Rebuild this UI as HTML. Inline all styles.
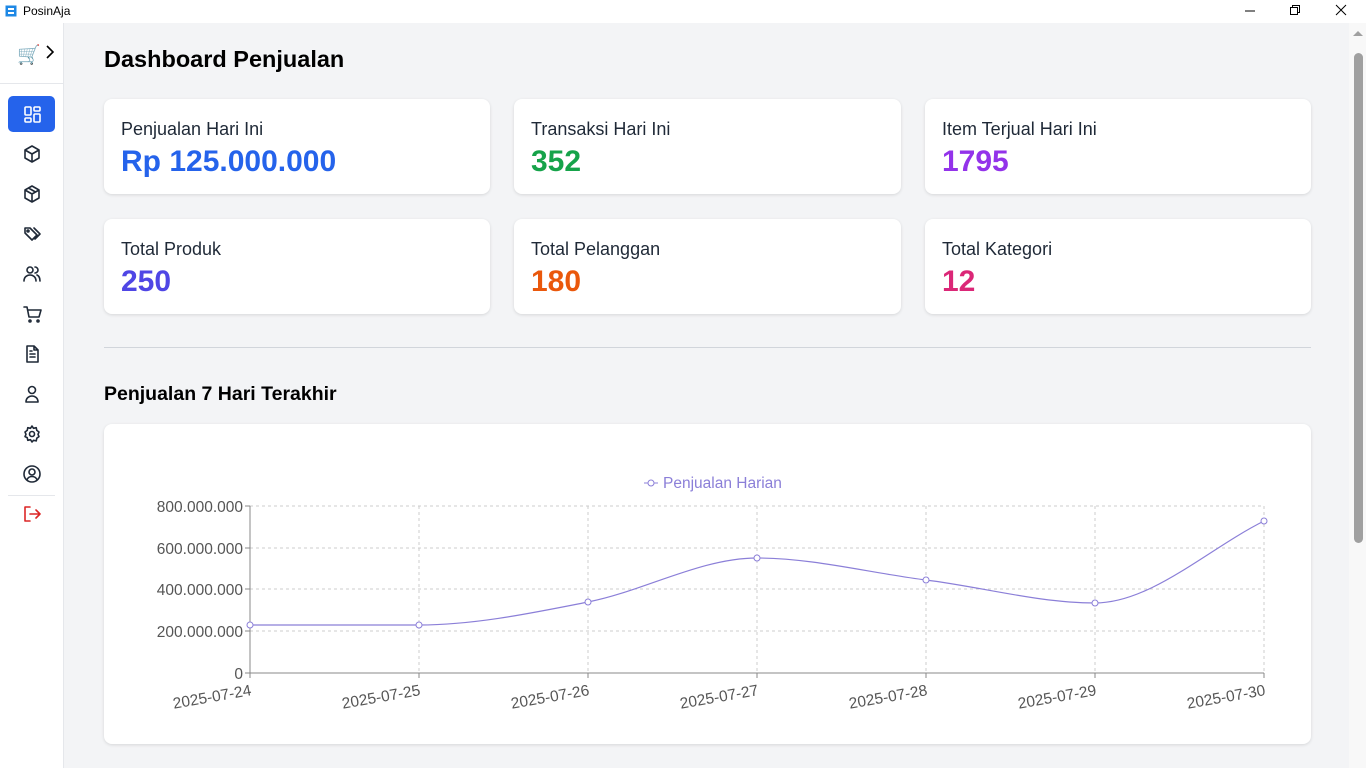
<!DOCTYPE html>
<html><head><meta charset="utf-8"><style>
*{box-sizing:border-box;margin:0;padding:0}
body{width:1366px;height:768px;overflow:hidden;font-family:"Liberation Sans",sans-serif;background:#f3f4f6;position:relative}
.tb{position:absolute;left:0;top:0;width:1366px;height:23px;background:#fff;font-size:12px}
.side{position:absolute;left:0;top:23px;width:64px;height:745px;background:#fff;border-right:1px solid #e5e7eb}
.ic{position:absolute;left:8px;width:47px;height:36px;display:flex;align-items:center;justify-content:center}
.ic svg{width:20px;height:20px;fill:none;stroke:#1f2937;stroke-width:1.6;stroke-linecap:round;stroke-linejoin:round}
.card{position:absolute;background:#fff;border-radius:8px;box-shadow:0 1px 3px rgba(0,0,0,.12)}
.lbl{position:absolute;left:17px;top:20px;font-size:18px;color:#1f2937}
.val{position:absolute;left:17px;top:46px;font-size:30px;font-weight:bold}
h1{position:absolute;left:104px;top:46px;font-size:23.5px;font-weight:bold;color:#000}
h2{position:absolute;left:104px;top:383px;font-size:19.5px;font-weight:bold;color:#000}
</style></head><body>
<div class="tb">
<svg style="position:absolute;left:5px;top:5px" width="12" height="12"><rect x="0.5" y="0.5" width="11" height="11" fill="#1e88e5"/><rect x="3" y="3" width="6" height="2" fill="#fff"/><rect x="3" y="7" width="6" height="2" fill="#fff"/></svg>
<span style="position:absolute;left:23px;top:4px;color:#000">PosinAja</span>
<svg style="position:absolute;left:1244px;top:5px" width="12" height="12"><line x1="1" y1="6" x2="11" y2="6" stroke="#000"/></svg>
<svg style="position:absolute;left:1289px;top:4px" width="12" height="12"><rect x="1.5" y="3.5" width="7" height="7" fill="none" stroke="#000"/><path d="M3.5 3.5V1.5h7v7h-2" fill="none" stroke="#000"/></svg>
<svg style="position:absolute;left:1335px;top:4px" width="12" height="12"><path d="M1 1L11 11M11 1L1 11" stroke="#000"/></svg>
</div>
<div class="side">
<div style="position:absolute;left:17px;top:20px;font-size:19px">🛒</div>
<svg style="position:absolute;left:46px;top:22px" width="8" height="14"><path d="M1 1l6 6-6 6" fill="none" stroke="#000" stroke-width="1.6"/></svg>
<div style="position:absolute;left:0;top:60px;width:63px;border-top:1px solid #e5e7eb"></div>
<div class="ic" style="top:73px;background:#2563eb;border-radius:5px"><svg style="stroke:#fff"><rect x="3" y="3" width="6" height="8" rx="1"/><rect x="12" y="3" width="6" height="4" rx="1"/><rect x="3" y="14" width="6" height="4" rx="1"/><rect x="12" y="10" width="6" height="8" rx="1"/></svg></div>
<div class="ic" style="top:113px"><svg><path d="M10 2l7 4v8l-7 4-7-4V6z M3 6l7 4 7-4 M10 10v8"/></svg></div>
<div class="ic" style="top:153px"><svg><path d="M10 2l7 4v8l-7 4-7-4V6z M3 6l7 4 7-4 M10 10v8 M6.5 4l7 4"/></svg></div>
<div class="ic" style="top:193px"><svg><path d="M3 4v5l7 7 5-5-7-7z M12 4l6 6-5 5"/><circle cx="6" cy="7" r="1"/></svg></div>
<div class="ic" style="top:233px"><svg><circle cx="8" cy="6" r="3"/><path d="M2 17c0-4 3-6 6-6s6 2 6 6 M13 3a3 3 0 010 6 M15 11c2 1 3 3 3 6"/></svg></div>
<div class="ic" style="top:273px"><svg><path d="M2 3h3l2 10h10l2-7H6"/><circle cx="8" cy="17" r="1"/><circle cx="16" cy="17" r="1"/></svg></div>
<div class="ic" style="top:313px"><svg><path d="M5 2h7l4 4v12H5z M12 2v4h4 M8 10h5 M8 13h5 M8 7h2"/></svg></div>
<div class="ic" style="top:353px"><svg><circle cx="10" cy="6" r="3.5"/><path d="M4 18c0-4 3-6 6-6s6 2 6 6z"/></svg></div>
<div class="ic" style="top:393px"><svg><circle cx="10" cy="10" r="2.5"/><path d="M10 2l1.5 2.3 2.7-.6.6 2.7L17 8l-1 2.3 1 2.3-2.2 1.6-.6 2.7-2.7-.6L10 18l-1.5-2.3-2.7.6-.6-2.7L3 12.6 4 10.3 3 8l2.2-1.6.6-2.7 2.7.6z"/></svg></div>
<div class="ic" style="top:433px"><svg><circle cx="10" cy="10" r="8"/><circle cx="10" cy="8" r="3"/><path d="M5 15.5c1-2 3-3 5-3s4 1 5 3"/></svg></div>
<div style="position:absolute;left:8px;top:472px;width:47px;border-top:1px solid #e5e7eb"></div>
<div class="ic" style="top:473px"><svg style="stroke:#dc2626"><path d="M8 3H3v14h5 M8 10h10 M14 6l4 4-4 4"/></svg></div>
</div>
<h1>Dashboard Penjualan</h1>
<div class="card" style="left:104px;top:99px;width:386px;height:95px"><div class="lbl">Penjualan Hari Ini</div><div class="val" style="color:#2563eb">Rp 125.000.000</div></div>
<div class="card" style="left:514px;top:99px;width:387px;height:95px"><div class="lbl">Transaksi Hari Ini</div><div class="val" style="color:#16a34a">352</div></div>
<div class="card" style="left:925px;top:99px;width:386px;height:95px"><div class="lbl">Item Terjual Hari Ini</div><div class="val" style="color:#9333ea">1795</div></div>
<div class="card" style="left:104px;top:219px;width:386px;height:95px"><div class="lbl">Total Produk</div><div class="val" style="color:#4f46e5">250</div></div>
<div class="card" style="left:514px;top:219px;width:387px;height:95px"><div class="lbl">Total Pelanggan</div><div class="val" style="color:#ea580c">180</div></div>
<div class="card" style="left:925px;top:219px;width:386px;height:95px"><div class="lbl">Total Kategori</div><div class="val" style="color:#db2777">12</div></div>
<div style="position:absolute;left:104px;top:347px;width:1207px;border-top:1px solid #d1d5db"></div>
<h2>Penjualan 7 Hari Terakhir</h2>
<div class="card" style="left:104px;top:424px;width:1207px;height:320px"></div>
<svg style="position:absolute;left:0;top:0" width="1366" height="768" font-family="Liberation Sans, sans-serif">
<g stroke="#ccc" stroke-dasharray="3,3">
<line x1="250" y1="506" x2="1264" y2="506"/><line x1="250" y1="548" x2="1264" y2="548"/><line x1="250" y1="589" x2="1264" y2="589"/><line x1="250" y1="631" x2="1264" y2="631"/>
<line x1="419" y1="506" x2="419" y2="673"/><line x1="588" y1="506" x2="588" y2="673"/><line x1="757" y1="506" x2="757" y2="673"/><line x1="926" y1="506" x2="926" y2="673"/><line x1="1095" y1="506" x2="1095" y2="673"/><line x1="1264" y1="506" x2="1264" y2="673"/>
</g>
<g stroke="#888"><line x1="250" y1="506" x2="250" y2="673"/><line x1="250" y1="673" x2="1264" y2="673"/>
<line x1="245" y1="506" x2="250" y2="506"/><line x1="245" y1="548" x2="250" y2="548"/><line x1="245" y1="589" x2="250" y2="589"/><line x1="245" y1="631" x2="250" y2="631"/><line x1="245" y1="673" x2="250" y2="673"/>
<line x1="250" y1="673" x2="250" y2="678"/><line x1="419" y1="673" x2="419" y2="678"/><line x1="588" y1="673" x2="588" y2="678"/><line x1="757" y1="673" x2="757" y2="678"/><line x1="926" y1="673" x2="926" y2="678"/><line x1="1095" y1="673" x2="1095" y2="678"/><line x1="1264" y1="673" x2="1264" y2="678"/></g>
<g font-size="15.5" fill="#555" text-anchor="end">
<text x="243" y="512">800.000.000</text><text x="243" y="554">600.000.000</text><text x="243" y="595">400.000.000</text><text x="243" y="637">200.000.000</text><text x="243" y="679">0</text>
<text transform="translate(252,695) rotate(-10)">2025-07-24</text>
<text transform="translate(421,695) rotate(-10)">2025-07-25</text>
<text transform="translate(590,695) rotate(-10)">2025-07-26</text>
<text transform="translate(759,695) rotate(-10)">2025-07-27</text>
<text transform="translate(928,695) rotate(-10)">2025-07-28</text>
<text transform="translate(1097,695) rotate(-10)">2025-07-29</text>
<text transform="translate(1266,695) rotate(-10)">2025-07-30</text>
</g>
<line x1="644" y1="483" x2="658" y2="483" stroke="#8b7fd8"/><circle cx="651" cy="483" r="3" fill="#fff" stroke="#8b7fd8"/>
<text x="663" y="488" font-size="15.5" fill="#8b7fd8">Penjualan Harian</text>
<path d="M250,625 C306,625 363,625 419,625 C475,625 532,613 588,602 C644,591 701,558 757,558 C813,558 870,573 926,580 C982,587 1039,603 1095,603 C1151,603 1208,549 1264,521" fill="none" stroke="#8b7fd8" stroke-width="1.2"/>
<g fill="#fff" stroke="#8b7fd8"><circle cx="250" cy="625" r="3"/><circle cx="419" cy="625" r="3"/><circle cx="588" cy="602" r="3"/><circle cx="757" cy="558" r="3"/><circle cx="926" cy="580" r="3"/><circle cx="1095" cy="603" r="3"/><circle cx="1264" cy="521" r="3"/></g>
</svg>
<div style="position:absolute;left:1349px;top:23px;width:17px;height:745px;background:#f8f8f8"></div>
<svg style="position:absolute;left:1353px;top:30px" width="10" height="6"><path d="M0 6L5 1 10 6z" fill="#a0a0a0"/></svg>
<div style="position:absolute;left:1354px;top:53px;width:9px;height:490px;background:#a0a0a0;border-radius:5px"></div>
</body></html>
